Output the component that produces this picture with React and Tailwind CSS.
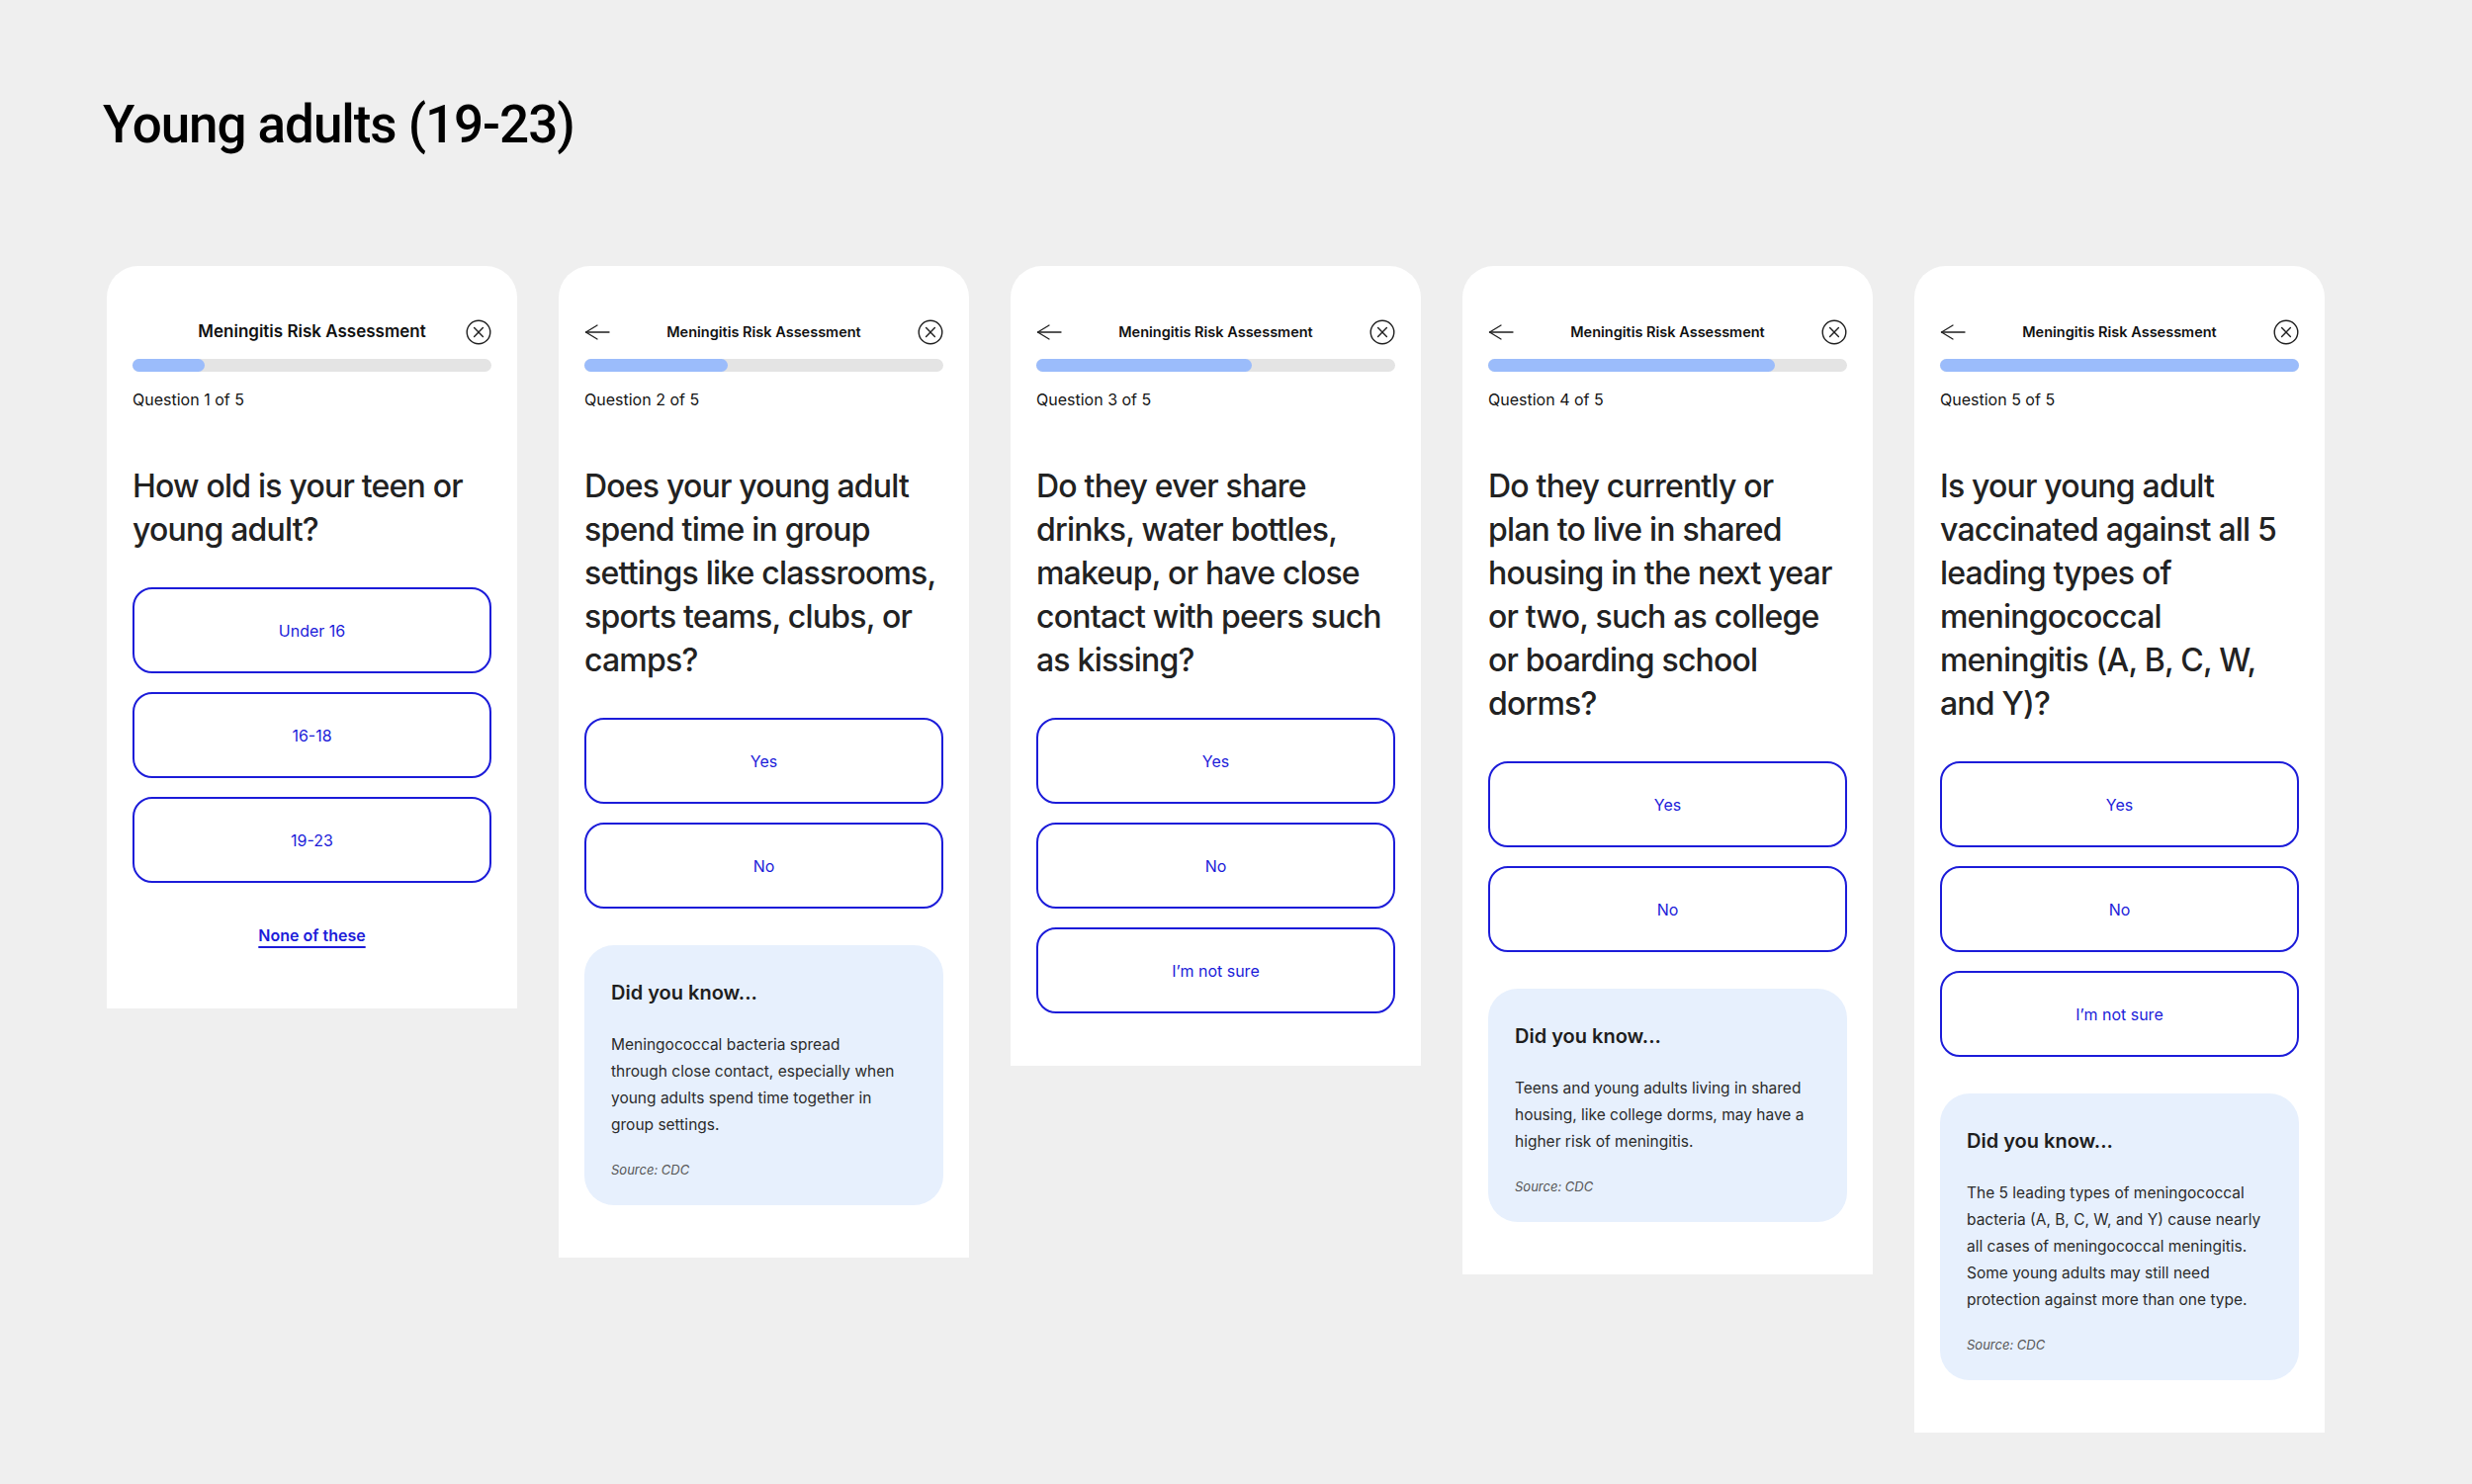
import React from 'react';

const BLUE = 'text-[#1c1cd9]';

const screens = [
  {
    step: 1,
    back: false,
    question: ['How old is your teen or', 'young adult?'],
    options: ['Under 16', '16-18', '19-23'],
    link: 'None of these',
  },
  {
    step: 2,
    back: true,
    question: [
      'Does your young adult',
      'spend time in group',
      'settings like classrooms,',
      'sports teams, clubs, or',
      'camps?',
    ],
    options: ['Yes', 'No'],
    fact: [
      'Meningococcal bacteria spread',
      'through close contact, especially when',
      'young adults spend time together in',
      'group settings.',
    ],
  },
  {
    step: 3,
    back: true,
    question: [
      'Do they ever share',
      'drinks, water bottles,',
      'makeup, or have close',
      'contact with peers such',
      'as kissing?',
    ],
    options: ['Yes', 'No', 'I’m not sure'],
  },
  {
    step: 4,
    back: true,
    question: [
      'Do they currently or',
      'plan to live in shared',
      'housing in the next year',
      'or two, such as college',
      'or boarding school',
      'dorms?',
    ],
    options: ['Yes', 'No'],
    fact: [
      'Teens and young adults living in shared',
      'housing, like college dorms, may have a',
      'higher risk of meningitis.',
    ],
  },
  {
    step: 5,
    back: true,
    question: [
      'Is your young adult',
      'vaccinated against all 5',
      'leading types of',
      'meningococcal',
      'meningitis (A, B, C, W,',
      'and Y)?',
    ],
    options: ['Yes', 'No', 'I’m not sure'],
    fact: [
      'The 5 leading types of meningococcal',
      'bacteria (A, B, C, W, and Y) cause nearly',
      'all cases of meningococcal meningitis.',
      'Some young adults may still need',
      'protection against more than one type.',
    ],
  },
];

const BackArrow = () => (
  <svg width="26" height="16" viewBox="0 0 26 16" fill="none" stroke="#1f1f1f" strokeWidth="1.3" strokeLinecap="round" strokeLinejoin="round">
    <path d="M25 8H1.5" />
    <path d="M13 1 1.5 8 13 15" />
  </svg>
);

const CloseCircle = () => (
  <svg width="26" height="26" viewBox="0 0 26 26" fill="none" stroke="#1f1f1f" strokeWidth="1.4" strokeLinecap="round">
    <circle cx="13" cy="13" r="11.8" />
    <path d="M8.6 8.6l8.8 8.8M17.4 8.6l-8.8 8.8" />
  </svg>
);

const Lines = ({ lines }) =>
  lines.map((line, i) => (
    <span key={i} className="block whitespace-nowrap">
      {line}
    </span>
  ));

const QuestionCard = ({ screen }) => {
  const { step, back, question, options, link, fact } = screen;
  const progress = `${(step / 5) * 100}%`;

  return (
    <div
      className={`w-[415px] shrink-0 rounded-t-[32px] bg-white px-[26px] pt-[54px] ${
        link ? 'pb-[62px]' : 'pb-[53px]'
      }`}
    >
      {/* top bar */}
      <div className="grid h-[26px] grid-cols-[26px_1fr_26px] items-center">
        <div className="flex items-center">{back && <BackArrow />}</div>
        <p
          className={`text-center font-semibold text-[#111] ${
            step === 1 ? 'text-[17px]' : 'text-[14.5px]'
          }`}
        >
          Meningitis Risk Assessment
        </p>
        <CloseCircle />
      </div>

      {/* progress */}
      <div className="mt-[14px] h-[13px] w-full rounded-full bg-[#e4e4e4]">
        <div className="h-full rounded-full bg-[#9bbcfb]" style={{ width: progress }} />
      </div>
      <p className="mt-[17px] text-[16px] leading-[22px] text-[#141414]">Question {step} of 5</p>

      <h2 className="mt-[55px] text-[32px] leading-[44px] font-medium tracking-[-0.025em] text-[#222]">
        <Lines lines={question} />
      </h2>

      <div className="mt-[36px] flex flex-col gap-[19px]">
        {options.map((opt) => (
          <button
            key={opt}
            className={`flex h-[87px] w-full items-center justify-center rounded-[20px] border-2 border-[#1c1cd9] bg-white text-[16px] ${BLUE}`}
          >
            {opt}
          </button>
        ))}
      </div>

      {link && (
        <div className="mt-[41px] text-center">
          <a className={`text-[16px] font-semibold underline decoration-[1.5px] underline-offset-[5px] ${BLUE}`}>
            {link}
          </a>
        </div>
      )}

      {fact && (
        <div className="mt-[37px] rounded-[30px] bg-[#e7f0fd] px-[27px] pt-[34px] pb-[26px]">
          <h3 className="text-[20px] leading-[28px] font-semibold text-[#1e1e1e]">Did you know...</h3>
          <p className="mt-[25px] text-[15.5px] leading-[27px] text-[#2b2b2b]">
            <Lines lines={fact} />
          </p>
          <p className="mt-[22px] text-[13px] leading-[20px] italic text-[#555]">Source: CDC</p>
        </div>
      )}
    </div>
  );
};

export default function App() {
  return (
    <div className="min-h-screen w-full bg-[#efefef] pt-[100px] pb-[60px] pl-[104px] font-['Inter',sans-serif]">
      <h1 className="font-['Roboto',sans-serif] text-[53px] leading-none font-medium tracking-[-0.02em] text-black">
        Young adults (19-23)
      </h1>
      <div className="mt-[116px] ml-[4px] flex items-start gap-[42px]">
        {screens.map((s) => (
          <QuestionCard key={s.step} screen={s} />
        ))}
      </div>
    </div>
  );
}
